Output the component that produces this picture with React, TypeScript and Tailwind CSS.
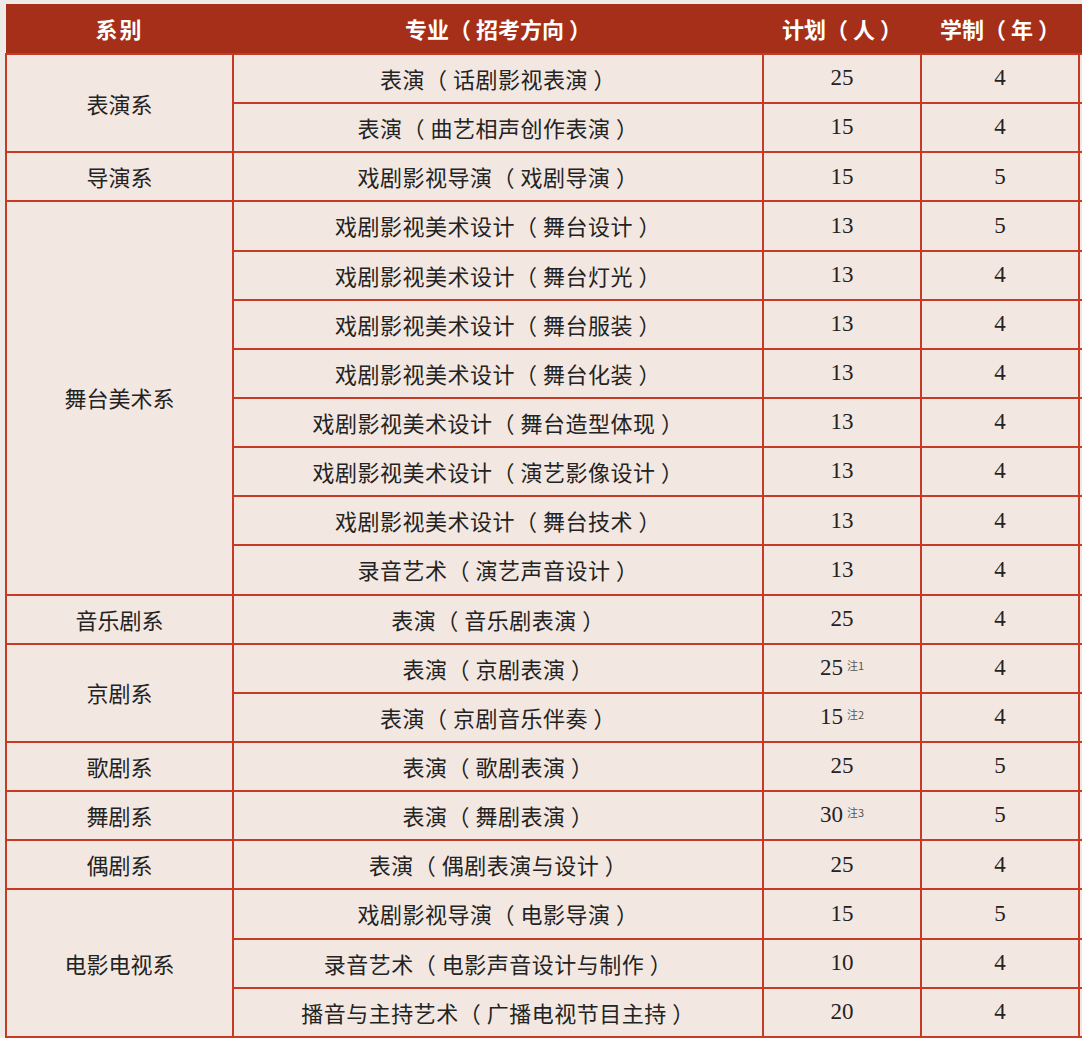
type Major = {
  name: string;
  plan: string;
  note?: string;
  years: string;
};

type Department = {
  name: string;
  majors: Major[];
};

const departments: Department[] = [
  {
    name: "表演系",
    majors: [
      { name: "表演（话剧影视表演）", plan: "25", years: "4" },
      { name: "表演（曲艺相声创作表演）", plan: "15", years: "4" },
    ],
  },
  {
    name: "导演系",
    majors: [{ name: "戏剧影视导演（戏剧导演）", plan: "15", years: "5" }],
  },
  {
    name: "舞台美术系",
    majors: [
      { name: "戏剧影视美术设计（舞台设计）", plan: "13", years: "5" },
      { name: "戏剧影视美术设计（舞台灯光）", plan: "13", years: "4" },
      { name: "戏剧影视美术设计（舞台服装）", plan: "13", years: "4" },
      { name: "戏剧影视美术设计（舞台化装）", plan: "13", years: "4" },
      { name: "戏剧影视美术设计（舞台造型体现）", plan: "13", years: "4" },
      { name: "戏剧影视美术设计（演艺影像设计）", plan: "13", years: "4" },
      { name: "戏剧影视美术设计（舞台技术）", plan: "13", years: "4" },
      { name: "录音艺术（演艺声音设计）", plan: "13", years: "4" },
    ],
  },
  {
    name: "音乐剧系",
    majors: [{ name: "表演（音乐剧表演）", plan: "25", years: "4" }],
  },
  {
    name: "京剧系",
    majors: [
      { name: "表演（京剧表演）", plan: "25", note: "注1", years: "4" },
      { name: "表演（京剧音乐伴奏）", plan: "15", note: "注2", years: "4" },
    ],
  },
  {
    name: "歌剧系",
    majors: [{ name: "表演（歌剧表演）", plan: "25", years: "5" }],
  },
  {
    name: "舞剧系",
    majors: [{ name: "表演（舞剧表演）", plan: "30", note: "注3", years: "5" }],
  },
  {
    name: "偶剧系",
    majors: [{ name: "表演（偶剧表演与设计）", plan: "25", years: "4" }],
  },
  {
    name: "电影电视系",
    majors: [
      { name: "戏剧影视导演（电影导演）", plan: "15", years: "5" },
      { name: "录音艺术（电影声音设计与制作）", plan: "10", years: "4" },
      { name: "播音与主持艺术（广播电视节目主持）", plan: "20", years: "4" },
    ],
  },
];

// the printed table sets its full-width brackets with air on both sides
const spaced = (s: string) => s.replace("（", "（ ").replace("）", " ）");

const cell =
  "border-2 border-[#c63b26] bg-[#f3e8e1] text-center align-middle text-[#232323]";
const cjk = "font-['Noto_Sans_CJK_SC',sans-serif] text-[22px]";
const num = "font-['Liberation_Serif','Noto_Sans_CJK_SC',serif] text-[23px]";

export default function App() {
  return (
    <div className="h-[1038px] w-[1082px] overflow-hidden bg-[#eeeae7] pl-[5px] pt-[4px]">
      <table className="w-[1240px] table-fixed border-collapse">
        <colgroup>
          <col className="w-[227px]" />
          <col className="w-[530px]" />
          <col className="w-[158px]" />
          <col className="w-[158px]" />
          <col className="w-[167px]" />
        </colgroup>
        <thead>
          <tr className="h-[50px] bg-[#a52f18] font-bold text-white">
            <th className={`${cjk} text-[21px] tracking-[2px]`}>系别</th>
            <th className={`${cjk} text-[21px]`}>{spaced("专业（招考方向）")}</th>
            <th className={`${cjk} text-[21px]`}>{spaced("计划（人）")}</th>
            <th className={`${cjk} text-[21px]`}>{spaced("学制（年）")}</th>
            <th />
          </tr>
        </thead>
        <tbody>
          {departments.map((dept) =>
            dept.majors.map((major, i) => (
              <tr key={dept.name + major.name} className="h-[49.15px]">
                {i === 0 ? (
                  <td rowSpan={dept.majors.length} className={`${cell} ${cjk}`}>
                    {dept.name}
                  </td>
                ) : null}
                <td className={`${cell} ${cjk} tracking-[0.5px]`}>{spaced(major.name)}</td>
                <td className={`${cell} ${num}`}>
                  {major.plan}
                  {major.note ? (
                    <sup className="ml-1 font-['Noto_Sans_CJK_SC',sans-serif] text-[11px] text-[#555]">
                      {major.note}
                    </sup>
                  ) : null}
                </td>
                <td className={`${cell} ${num}`}>{major.years}</td>
                <td className={cell} />
              </tr>
            ))
          )}
        </tbody>
      </table>
    </div>
  );
}
